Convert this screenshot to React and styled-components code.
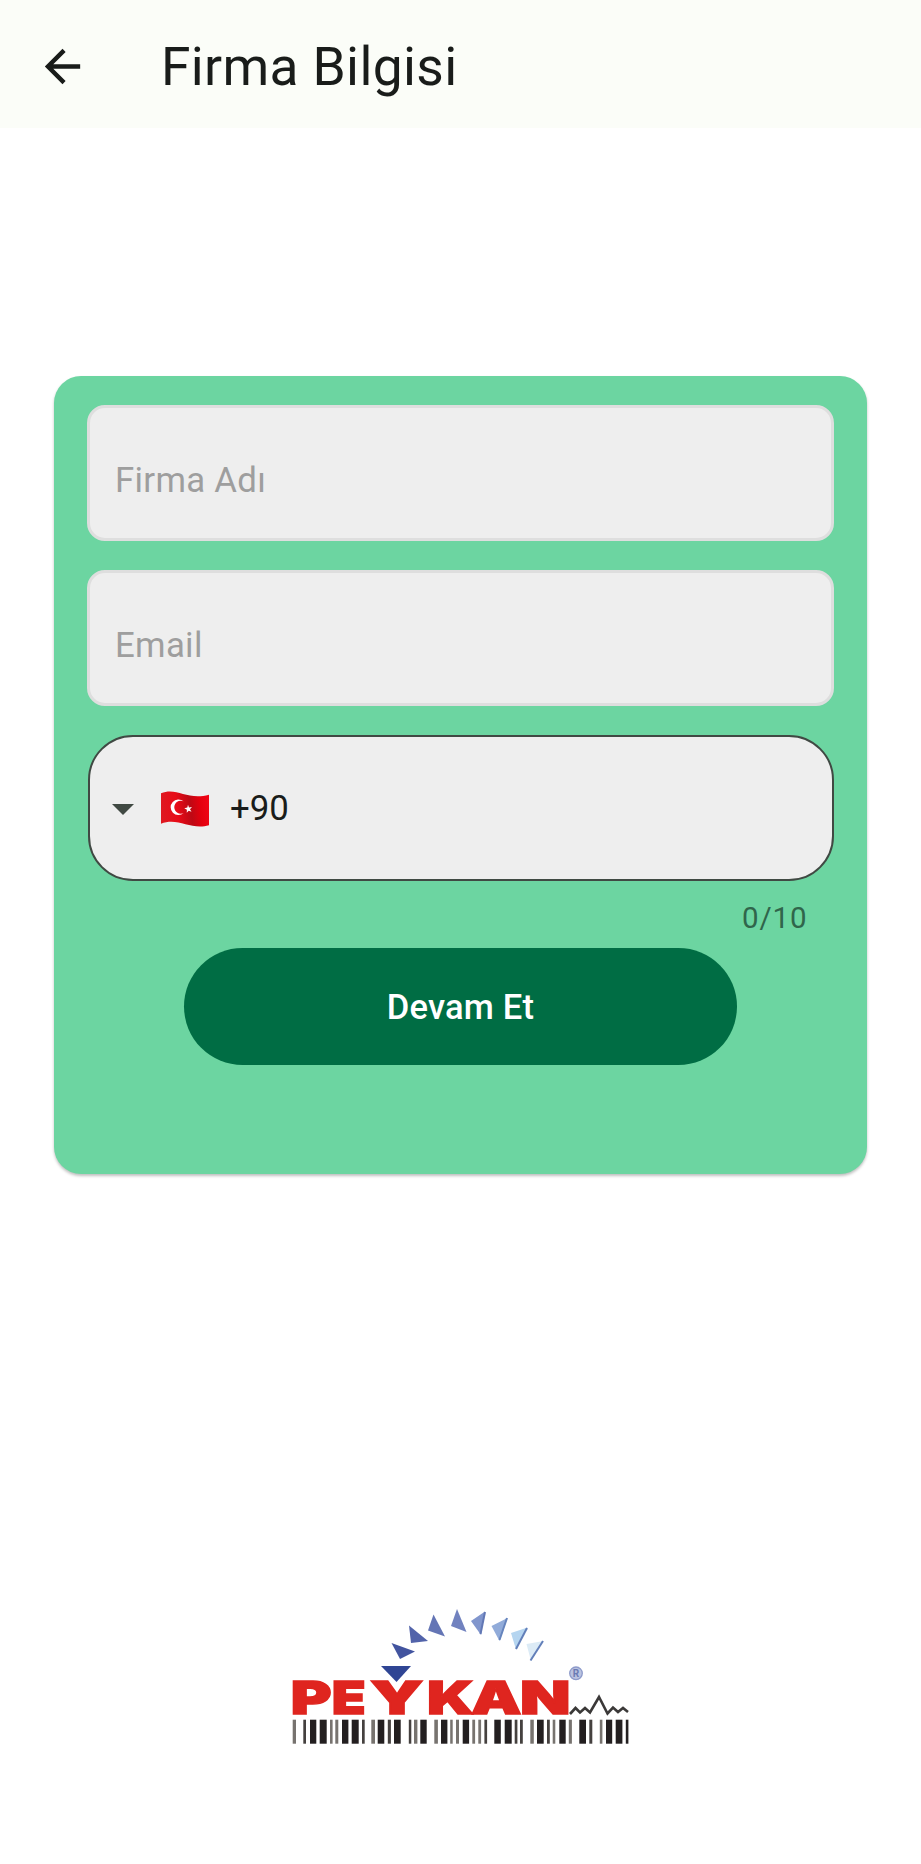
import React from "react";
import styled, { createGlobalStyle } from "styled-components";

const GlobalStyle = createGlobalStyle`
  *, *::before, *::after { box-sizing: border-box; }
  body { margin: 0; background: #fff; font-family: Roboto, "Liberation Sans", sans-serif; }
`;

const Screen = styled.div`
  display: flex;
  flex-direction: column;
  min-height: 1864px;
  background: #fff;
`;

const AppBar = styled.header`
  display: flex;
  align-items: center;
  height: 128px;
  padding: 4px 0 0 36px;
  background: #fbfdf8;
`;

const BackButton = styled.button`
  display: flex;
  width: 53px;
  height: 53px;
  padding: 0;
  border: 0;
  background: none;
  color: #191c1a;
`;

const Title = styled.h1`
  margin: 2px 0 0 72px;
  font-size: 53.3px;
  font-weight: 400;
  line-height: 64px;
  letter-spacing: 0.35px;
  color: #191c1a;
`;

const Card = styled.main`
  display: flex;
  flex-direction: column;
  align-items: center;
  height: 797.5px;
  margin: 248.4px 54px 0 54px;
  padding: 28.6px 33px 0;
  border-radius: 27px;
  background: #6cd5a1;
  box-shadow: 0 2px 3px rgba(0, 0, 0, 0.25);
`;

const Field = styled.input`
  width: 100%;
  height: 136.5px;
  flex: none;
  margin-bottom: 28.5px;
  padding: 13px 25px 0;
  border: 3.5px solid #dedede;
  border-radius: 18px;
  outline: 0;
  background: #eee;
  font: 400 34.8px Roboto, sans-serif;
  letter-spacing: 0.3px;
  &::placeholder { color: #9e9e9e; opacity: 1; }
`;

const PhoneField = styled.div`
  display: flex;
  align-items: center;
  align-self: stretch;
  height: 146.5px;
  flex: none;
  margin: 0 0.5px;
  padding-left: 22.5px;
  border: 2px solid #404943;
  border-radius: 45px;
  background: #eee;
`;

const Caret = styled.svg`
  width: 22px;
  height: 11px;
  margin: 2px 26px 0 0;
  fill: #404943;
`;

const DialCode = styled.span`
  margin-left: 20px;
  font-size: 34.8px;
  line-height: 48px;
  color: #191c1a;
`;

const Counter = styled.div`
  align-self: flex-end;
  height: 40px;
  margin: 17px 26.5px 10px 0;
  font-size: 29.5px;
  line-height: 40px;
  letter-spacing: 0.9px;
  color: #30654b;
`;

const SubmitButton = styled.button`
  width: 553px;
  height: 116.5px;
  flex: none;
  padding: 0;
  border: 0;
  border-radius: 59px;
  background: #006d44;
  color: #fff;
  font: 500 34.5px Roboto, sans-serif;
  letter-spacing: 0.2px;
`;

const Footer = styled.footer`
  display: flex;
  padding: 426px 0 0 280px;
`;

const triangles = [
  ["381,1666 411,1666 396.5,1682", "#2f4594"],
  ["391.5,1643 415,1651.5 400,1659", "#42549f"],
  ["409,1625.5 428,1641 411,1643", "#5263aa"],
  ["433.5,1614.5 445,1636.5 428,1630.5", "#6475b5"],
  ["457,1609 466.5,1632 451,1626", "#7182bf"],
  ["485,1611.5 481,1635 471,1621", "#8196cd"],
  ["507.5,1618 499.5,1641 491.5,1626", "#91abd9"],
  ["527.5,1627.5 516,1649.5 511,1633", "#b5d5f0"],
  ["543.5,1641 531,1661 526.5,1644", "#dcebf6"],
];

const triangleEdges = [
  ["485,1612 480.5,1634", "#6278b5"],
  ["507,1618 499.5,1640", "#6684bd"],
  ["527,1628 516,1649", "#627fb9"],
  ["543,1641 530.5,1660.5", "#627fb9"],
];

const letters = [
  ["P", 290.8, 40.8],
  ["E", 331.7, 34],
  ["Y", 370, 53.5],
  ["K", 427, 47],
  ["A", 471, 50.5],
  ["N", 520, 50.5],
];

const DARK = "#231f20";
const GREY = "#77736f";
const MID = "#45413f";
const bars = [
  [292.7, 3.3, GREY], [303.3, 2.7, MID], [310, 6.3, DARK], [319.7, 7, DARK],
  [330, 2.6, GREY], [335.3, 3, GREY], [342, 6.4, DARK], [351.7, 7, DARK],
  [362, 2.7, MID], [371.3, 3.7, GREY], [377.7, 6.6, DARK], [387.8, 3.1, MID],
  [394, 6.7, DARK], [408.8, 2.5, MID], [414, 3.4, GREY], [420.3, 6.4, DARK],
  [434.3, 3.6, GREY], [441, 6.4, DARK], [450.2, 2.5, GREY], [456, 3, GREY],
  [462.7, 6.4, DARK], [472.3, 2.8, GREY], [478.3, 2.8, GREY], [484.4, 2.7, MID],
  [494.3, 6.5, DARK], [504.7, 7, DARK], [514.7, 2.7, MID], [520, 2.8, MID],
  [530.3, 3.5, GREY], [537, 6.7, DARK], [547, 2.8, MID], [552.7, 2.6, GREY],
  [559.3, 6.4, DARK], [568.8, 3.1, GREY], [579.3, 6.7, DARK], [589.3, 3, MID],
  [599.8, 2.6, GREY], [606, 6.2, DARK], [615.7, 6.7, DARK], [625.8, 2.6, DARK],
];

function TurkeyFlag() {
  return (
    <svg width="50" height="37" viewBox="0 -0.8 50 37" role="img" aria-label="TR">
      <defs>
        <linearGradient id="cloth" x1="0" y1="0.2" x2="1" y2="0.1">
          <stop offset="0" stopColor="#df1820" />
          <stop offset="0.3" stopColor="#e80b17" />
          <stop offset="0.58" stopColor="#bd0914" />
          <stop offset="0.78" stopColor="#e3000e" />
          <stop offset="1" stopColor="#f20516" />
        </linearGradient>
      </defs>
      <path d="M1 2.5C17-4 27 10 49 4V34.5C31 40 18 26 1 33Z" fill="url(#cloth)" />
      <path d="M23.5 10.5A7.8 7.8 0 1 0 23.7 22.2A6.5 6.5 0 1 1 23.5 10.5Z" fill="#fff" />
      <path d="M28 14l1 2.7 3-.6-2 2.3 1.5 2.6-2.8-1.1-2 2 .2-3-2.6-1.5 3-.6Z" fill="#fff" />
    </svg>
  );
}

function Logo() {
  return (
    <svg width="360" height="160" viewBox="280 1600 360 160" role="img" aria-label="Peykan">
      <g fill="#df251f" stroke="#df251f" strokeWidth="1.4" fontFamily="Inter, sans-serif" fontWeight="900" fontSize="45.5">
        {letters.map(([char, x, width]) => (
          <text key={char} x={x} y="1714" textLength={width} lengthAdjust="spacingAndGlyphs">{char}</text>
        ))}
      </g>
      <polygon points="384,1668 409,1668 396.5,1684" fill="#fff" stroke="#fff" strokeWidth="3" />
      {triangles.map(([points, fill]) => (
        <polygon key={points} points={points} fill={fill} />
      ))}
      {triangleEdges.map(([points, stroke]) => (
        <polyline key={points} points={points} stroke={stroke} strokeWidth="2" />
      ))}
      <circle cx="576" cy="1673.3" r="6.3" fill="#bac3e0" stroke="#8d9aca" strokeWidth="1.3" />
      <text x="576" y="1677" textAnchor="middle" fontFamily="Roboto, sans-serif" fontWeight="700" fontSize="10" fill="#6a7ab3">R</text>
      <polyline
        points="570,1714 575.5,1708 580,1712.5 585,1708 590,1712.5 599,1697 607.5,1713.5 613,1707.5 618,1712 623,1708 628,1712"
        fill="none" stroke="#3b3938" strokeWidth="2.6"
      />
      {bars.map(([x, width, fill]) => (
        <rect key={x} x={x} y="1719.7" width={width} height="24" fill={fill} />
      ))}
    </svg>
  );
}

export default function App() {
  return (
    <Screen>
      <GlobalStyle />
      <AppBar>
        <BackButton aria-label="Geri">
          <svg width="53" height="53" viewBox="0 0 24 24" fill="currentColor">
            <path d="M20 11H7.83l5.59-5.59L12 4l-8 8 8 8 1.41-1.41L7.83 13H20v-2z" />
          </svg>
        </BackButton>
        <Title>Firma Bilgisi</Title>
      </AppBar>
      <Card>
        <Field placeholder="Firma Adı" />
        <Field placeholder="Email" />
        <PhoneField>
          <Caret viewBox="0 0 22 11"><path d="M0 0h22L11 11Z" /></Caret>
          <TurkeyFlag />
          <DialCode>+90</DialCode>
        </PhoneField>
        <Counter>0/10</Counter>
        <SubmitButton>Devam Et</SubmitButton>
      </Card>
      <Footer><Logo /></Footer>
    </Screen>
  );
}
